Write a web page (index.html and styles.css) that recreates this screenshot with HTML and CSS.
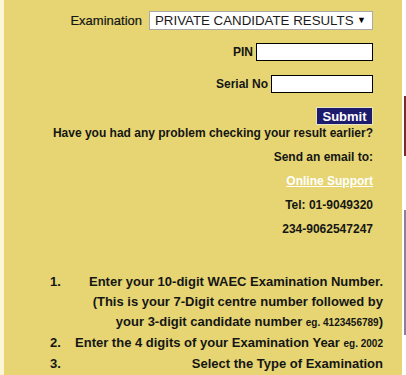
FILE: index.html
```html
<!DOCTYPE html>
<html>
<head>
<meta charset="utf-8">
<link rel="stylesheet" href="styles.css">
</head>
<body>
<div class="page">
  <div class="panel">
    <div class="form">
      <div class="row row-exam">
        <span class="label label-exam">Examination</span>
        <div class="select">
          <span class="select-text">PRIVATE CANDIDATE RESULTS</span>
          <span class="select-arrow">&#9660;</span>
        </div>
      </div>
      <div class="row">
        <span class="label">PIN</span>
        <input class="field field-pin" type="text">
      </div>
      <div class="row">
        <span class="label">Serial No</span>
        <input class="field field-serial" type="text">
      </div>
      <div class="row">
        <button class="submit">Submit</button>
      </div>
    </div>
    <div class="help">
      <div class="help-line">Have you had any problem checking your result earlier?</div>
      <div class="help-line">Send an email to:</div>
      <div class="help-line"><a class="support" href="#">Online Support</a></div>
      <div class="help-line">Tel: 01-9049320</div>
      <div class="help-line">234-9062547247</div>
    </div>
    <div class="steps">
      <div class="step">
        <span class="num">1.</span>
        <span class="txt">Enter your 10-digit WAEC Examination Number.<br>(This is your 7-Digit centre number followed by<br>your 3-digit candidate number <small>eg. 4123456789</small>)</span>
      </div>
      <div class="step">
        <span class="num">2.</span>
        <span class="txt">Enter the 4 digits of your Examination Year <small>eg. 2002</small></span>
      </div>
      <div class="step">
        <span class="num">3.</span>
        <span class="txt">Select the Type of Examination</span>
      </div>
    </div>
  </div>
  <div class="edge">
    <div class="edge-gap1"></div>
    <div class="edge-red"></div>
    <div class="edge-gap2"></div>
    <div class="edge-violet"></div>
  </div>
</div>
</body>
</html>
```
FILE: styles.css
```css
html, body {
  margin: 0;
  padding: 0;
  background: #ffffff;
}
body {
  font-family: "Liberation Sans", Arial, sans-serif;
  color: #151515;
}
.page {
  display: flex;
  height: 375px;
  overflow: hidden;
  background: #ffffff;
}
.panel {
  margin-left: 4px;
  width: 398px;
  height: 375px;
  background: #e6d572;
  box-sizing: border-box;
  padding-top: 11px;
  flex: none;
  box-shadow: -4px 0 0 #fbf6d8;
}
.form {
  display: flex;
  flex-direction: column;
  align-items: flex-end;
  gap: 14px;
  padding-right: 29px;
}
.row {
  display: flex;
  align-items: center;
  height: 18px;
  gap: 3px;
}
.row-exam {
  height: 18px;
  gap: 7px;
}
.label {
  font-size: 12px;
  font-weight: bold;
}
.label-exam {
  font-weight: normal;
  font-size: 13px;
  -webkit-text-stroke: 0.2px #151515;
}
.select {
  width: 224px;
  height: 19px;
  box-sizing: border-box;
  background: #ffffff;
  border: 1px solid #a9a9a9;
  display: flex;
  align-items: center;
  justify-content: space-between;
  padding: 0 6px 0 5px;
  font-size: 13.3px;
  color: #1a1a1a;
}
.select-arrow {
  font-size: 9px;
  color: #000;
}
.field {
  height: 18px;
  box-sizing: border-box;
  border: 1px solid #000;
  background: #fff;
  margin: 0;
  padding: 0;
}
.field-pin { width: 117px; }
.field-serial { width: 102px; }
.submit {
  width: 57px;
  height: 18px;
  box-sizing: border-box;
  margin: 0;
  padding: 0;
  background: #1d1b6c;
  color: #ffffff;
  border: 1px solid #e8e4c8;
  font-family: "Liberation Sans", Arial, sans-serif;
  font-size: 13px;
  font-weight: bold;
}
.help {
  display: flex;
  flex-direction: column;
  align-items: flex-end;
  padding-right: 29px;
  margin-top: -4px;
}
.help-line {
  font-size: 12px;
  font-weight: bold;
  line-height: 24px;
}
.support {
  color: #ffffff;
  text-decoration: underline;
}
.steps {
  margin-top: 31px;
  padding-left: 46px;
  padding-right: 19px;
  display: flex;
  flex-direction: column;
}
.step {
  display: flex;
  justify-content: space-between;
  font-size: 13px;
  font-weight: bold;
  line-height: 20px;
}
.num {
  width: 22px;
  flex: none;
}
.txt {
  text-align: right;
}
.txt small {
  font-size: 10px;
}
.edge {
  margin-left: 2px;
  width: 2px;
  display: flex;
  flex-direction: column;
  flex: none;
}
.edge-gap1 { height: 96px; }
.edge-red { height: 60px; background: #7a2a2a; }
.edge-gap2 { height: 54px; }
.edge-violet { height: 125px; background: #8c8198; }
```
